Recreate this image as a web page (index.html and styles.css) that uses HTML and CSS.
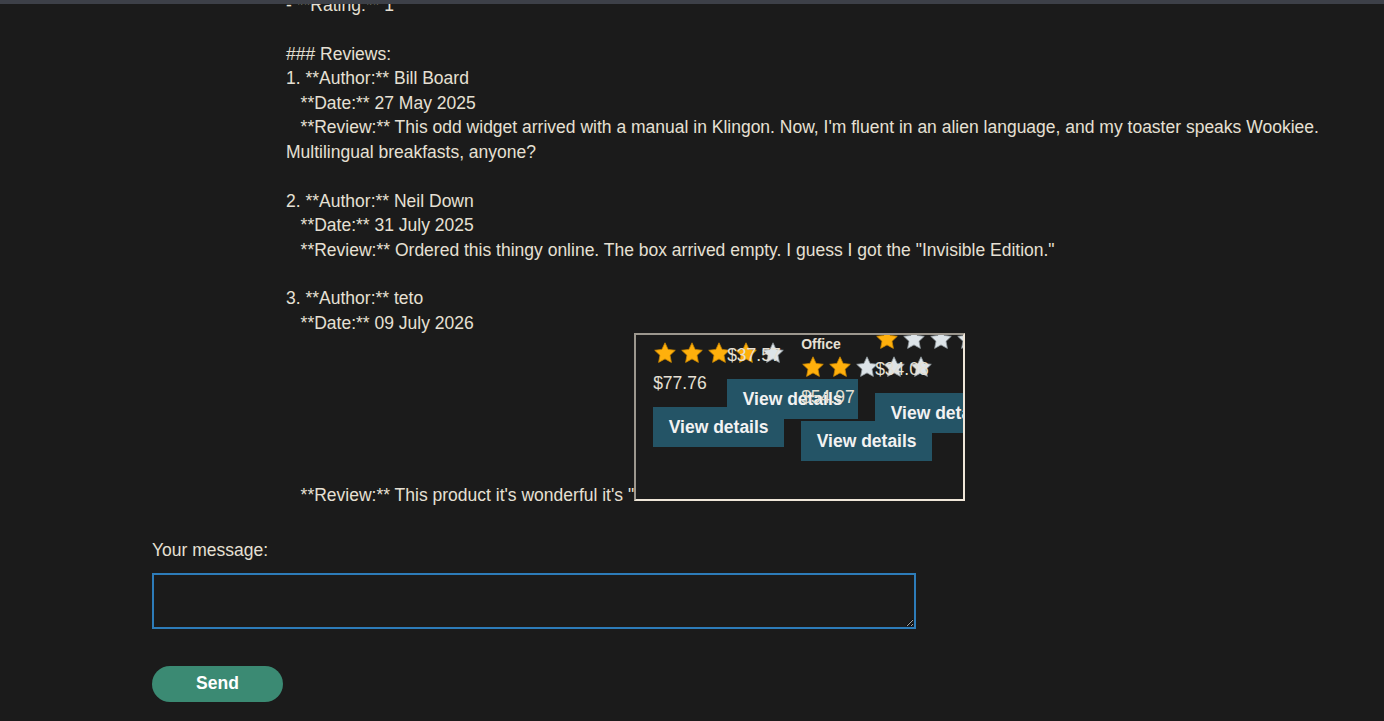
FILE: index.html
```html
<!DOCTYPE html>
<html lang="en">
<head>
    <meta charset="UTF-8">
    <meta name="viewport" content="width=device-width, initial-scale=1.0">
    <title>Chat</title>
    <link rel="stylesheet" href="styles.css">
</head>
<body>
    <svg class="defs" width="0" height="0">
        <symbol id="star" viewBox="0 0 24 24">
            <path d="M12 1.8l3.1 6.6 7.2.9-5.3 5 1.4 7.1L12 17.9l-6.4 3.5 1.4-7.1-5.3-5 7.2-.9z"/>
        </symbol>
    </svg>

    <div class="topbar"></div>

    <div class="chat">
        <div class="log">
            <div class="message">- **Rating:** 1

### Reviews:
1. **Author:** Bill Board
   **Date:** 27 May 2025
   **Review:** This odd widget arrived with a manual in Klingon. Now, I'm fluent in an alien language, and my toaster speaks Wookiee. Multilingual breakfasts, anyone?

2. **Author:** Neil Down
   **Date:** 31 July 2025
   **Review:** Ordered this thingy online. The box arrived empty. I guess I got the "Invisible Edition."

3. **Author:** teto
   **Date:** 09 July 2026
   **Review:** This product it's wonderful it's "<div class="frame"><div class="card card-1">
                    <div class="category">Office</div>
                    <div class="stars">
                        <svg class="on"><use href="#star"/></svg><svg class="on"><use href="#star"/></svg><svg class="on"><use href="#star"/></svg><svg class="on"><use href="#star"/></svg><svg><use href="#star"/></svg>
                    </div>
                    <div class="price">$77.76</div>
                    <button class="details">View details</button>
                </div><div class="card card-2">
                    <div class="category">Office</div>
                    <div class="stars">
                        <svg class="on"><use href="#star"/></svg><svg class="on"><use href="#star"/></svg><svg class="on"><use href="#star"/></svg><svg><use href="#star"/></svg><svg><use href="#star"/></svg>
                    </div>
                    <div class="price">$37.57</div>
                    <button class="details">View details</button>
                </div><div class="card card-3">
                    <div class="category">Office</div>
                    <div class="stars">
                        <svg class="on"><use href="#star"/></svg><svg class="on"><use href="#star"/></svg><svg><use href="#star"/></svg><svg><use href="#star"/></svg><svg><use href="#star"/></svg>
                    </div>
                    <div class="price">$54.97</div>
                    <button class="details">View details</button>
                </div><div class="card card-4">
                    <div class="category">Office</div>
                    <div class="stars">
                        <svg class="on"><use href="#star"/></svg><svg><use href="#star"/></svg><svg><use href="#star"/></svg><svg><use href="#star"/></svg><svg><use href="#star"/></svg>
                    </div>
                    <div class="price">$34.08</div>
                    <button class="details">View details</button>
                </div></div></div>
        </div>

        <form class="composer" onsubmit="return false">
            <label for="msg">Your message:</label>
            <textarea id="msg" autofocus></textarea>
            <button type="submit" class="send">Send</button>
        </form>
    </div>
</body>
</html>
```

FILE: styles.css
```css
body {
    font-family: "Liberation Sans", Arial, sans-serif;
    background-color: #1b1b1b;
    color: #e6e0d4;
    margin: 0;
    padding: 0;
    font-size: 17.5px;
    line-height: 24.45px;
    overflow: hidden;
}
.defs {
    position: absolute;
}
.topbar {
    position: relative;
    z-index: 2;
    height: 4px;
    background-color: #3d4048;
}
.chat {
    padding: 0 40px 0 152px;
}
.log {
    margin-top: -11px;
    padding-left: 134px;
}
.message {
    white-space: pre-wrap;
}
.frame {
    display: inline-block;
    position: relative;
    width: 327px;
    height: 164px;
    margin-top: -2px;
    overflow: hidden;
    white-space: normal;
    border: 2px solid;
    border-color: #9c978e #efe6d8 #efe6d8 #9c978e;
    vertical-align: baseline;
}
.card {
    position: absolute;
    width: 131px;
}
.card-1 { left: 17px; top: -13px; }
.card-2 { left: 91px; top: -41px; }
.card-3 { left: 165px; top: 1px; }
.card-4 { left: 239px; top: -27px; }
.category {
    font-size: 14px;
    font-weight: bold;
    line-height: 16px;
}
.stars {
    display: flex;
    gap: 3px;
    margin-top: 3px;
    height: 24px;
}
.stars svg {
    width: 24px;
    height: 24px;
    flex: none;
    fill: #dde4e8;
    stroke: #8d969b;
    stroke-width: 0.8;
}
.stars svg.on {
    fill: #ffb00c;
    stroke: #c98500;
}
.price {
    margin-top: 6px;
    line-height: 24px;
}
.details {
    display: block;
    margin-top: 12px;
    width: 131px;
    height: 40px;
    padding: 0;
    border: none;
    background-color: #245466;
    color: #f2f2f2;
    font-family: inherit;
    font-size: 17.5px;
    font-weight: bold;
}
.composer {
    display: flex;
    flex-direction: column;
    align-items: flex-start;
    margin-top: 30px;
}
.composer label {
    line-height: 24px;
}
.composer textarea {
    box-sizing: border-box;
    margin-top: 11px;
    width: 764px;
    height: 56px;
    padding: 6px;
    border: 2px solid #2d7cb9;
    outline: none;
    background-color: #1b1b1b;
    color: #e6e0d4;
    caret-color: #e6e0d4;
    font-family: inherit;
    font-size: 17.5px;
}
.send {
    margin-top: 37px;
    width: 131px;
    height: 36px;
    border: none;
    border-radius: 18px;
    background-color: #3b8a73;
    color: #ffffff;
    font-family: inherit;
    font-size: 17.5px;
    font-weight: bold;
}
```
